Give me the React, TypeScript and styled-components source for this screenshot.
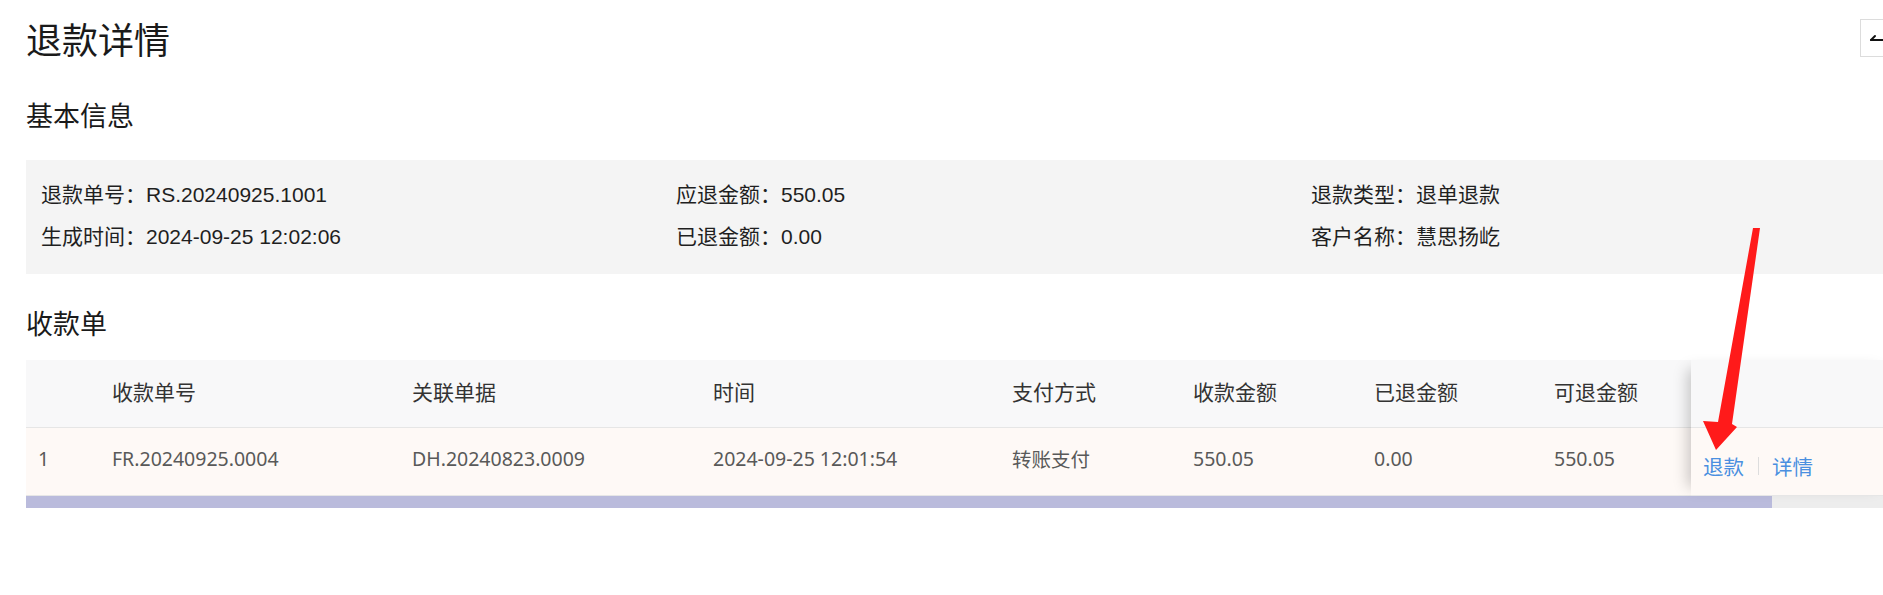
import React from "react";
import styled, { createGlobalStyle } from "styled-components";

const Global = createGlobalStyle`
  html, body { margin: 0; padding: 0; overflow: hidden; background: #fff; }
  * { box-sizing: border-box; }
`;

const Page = styled.div`
  position: relative;
  width: 1924px;
  padding: 0 26px;
  font-family: "Noto Sans", "Noto Sans CJK SC", sans-serif;
  color: #1f1f1f;
`;

const Header = styled.div`
  display: flex;
  align-items: center;
  justify-content: space-between;
  margin-top: 19px;
  height: 38px;
`;

const Title = styled.h1`
  margin: 0;
  font-family: "Noto Sans CJK SC", sans-serif;
  font-weight: 400;
  font-size: 36px;
  line-height: 38px;
  color: #1a1a1a;
`;

const BackButton = styled.button`
  width: 38px;
  height: 38px;
  border: 1px solid #dcdcdc;
  background: #fff;
  padding: 0;
  display: flex;
  align-items: center;
  justify-content: center;
`;

const SectionTitle = styled.h2<{ $top: number; $bottom: number }>`
  margin: ${(p) => p.$top}px 0 ${(p) => p.$bottom}px;
  font-family: "Noto Sans CJK SC", sans-serif;
  font-weight: 400;
  font-size: 27px;
  line-height: 40px;
  color: #1a1a1a;
`;

const InfoBox = styled.div`
  background: #f4f4f4;
  padding: 12px 15px 18px;
  display: grid;
  grid-template-columns: repeat(3, 635px);
  grid-auto-rows: 42px;
  align-items: center;
`;

const InfoItem = styled.div`
  font-family: "Liberation Sans", "Noto Sans CJK SC", sans-serif;
  font-size: 21px;
  color: #1f1f1f;
  white-space: nowrap;
`;

const TableFrame = styled.div`
  display: flex;
  flex-direction: column;
`;

const TableMain = styled.div`
  display: flex;
`;

const ScrollPane = styled.div`
  flex: 1;
  overflow: hidden;
`;

const COLS = "74px 300px 301px 299px 181px 181px 180px 200px";

const Row = styled.div<{ $head?: boolean }>`
  display: grid;
  grid-template-columns: ${COLS};
  height: 68px;
  padding-top: 9px;
  align-items: center;
  background: ${(p) => (p.$head ? "#f8f8f9" : "#fef9f6")};
  border-bottom: 1px solid #e6e6e6;
`;

const Cell = styled.div<{ $head?: boolean }>`
  padding: 0 12px;
  font-family: "Noto Sans", "Noto Sans CJK SC", sans-serif;
  font-size: ${(p) => (p.$head ? "21px" : "19.5px")};
  color: ${(p) => (p.$head ? "#333" : "#595959")};
  white-space: nowrap;
`;

const FixedPane = styled.div`
  width: 207px;
  position: relative;
  z-index: 1;
  box-shadow: -12px 0 14px -9px rgba(0, 0, 0, 0.22);
`;

const FixedCell = styled.div<{ $head?: boolean }>`
  height: 68px;
  display: flex;
  align-items: center;
  padding: 9px 12px 0;
  background: ${(p) => (p.$head ? "#f8f8f9" : "#fef9f6")};
  border-bottom: 1px solid #e6e6e6;
`;

const Link = styled.a`
  font-family: "Noto Sans CJK SC", sans-serif;
  font-size: 20.5px;
  color: #4a8fe0;
  text-decoration: none;
  cursor: pointer;
`;

const Divider = styled.span`
  width: 1px;
  height: 18px;
  background: #dddddd;
  margin: 0 13px 0 14px;
`;

const ScrollTrack = styled.div`
  height: 12px;
  background: #ededed;
`;

const ScrollThumb = styled.div`
  width: 1746px;
  height: 100%;
  background: #babbdc;
`;

const Annotation = styled.svg`
  position: absolute;
  left: 0;
  top: 0;
  z-index: 5;
  width: 1924px;
  height: 595px;
  pointer-events: none;
`;

const headers = ["", "收款单号", "关联单据", "时间", "支付方式", "收款金额", "已退金额", "可退金额", ""];
const row = ["1", "FR.20240925.0004", "DH.20240823.0009", "2024-09-25 12:01:54", "转账支付", "550.05", "0.00", "550.05", ""];

export default function App() {
  return (
    <>
      <Global />
      <Page>
        <Header>
          <Title>退款详情</Title>
          <BackButton aria-label="返回">
            <svg width="22" height="22" viewBox="0 0 22 22" fill="none" stroke="#111" strokeWidth="2" strokeLinecap="round">
              <path d="M3 13h16" />
              <path d="M3 13l4-4" />
            </svg>
          </BackButton>
        </Header>

        <SectionTitle $top={38} $bottom={25}>基本信息</SectionTitle>
        <InfoBox>
          <InfoItem>退款单号：RS.20240925.1001</InfoItem>
          <InfoItem>应退金额：550.05</InfoItem>
          <InfoItem>退款类型：退单退款</InfoItem>
          <InfoItem>生成时间：2024-09-25 12:02:06</InfoItem>
          <InfoItem>已退金额：0.00</InfoItem>
          <InfoItem>客户名称：慧思扬屹</InfoItem>
        </InfoBox>

        <SectionTitle $top={29} $bottom={17}>收款单</SectionTitle>
        <TableFrame>
          <TableMain>
            <ScrollPane>
              <Row $head>
                {headers.map((h, i) => (
                  <Cell key={i} $head>{h}</Cell>
                ))}
              </Row>
              <Row>
                {row.map((c, i) => (
                  <Cell key={i}>{c}</Cell>
                ))}
              </Row>
            </ScrollPane>
            <FixedPane>
              <FixedCell $head />
              <FixedCell>
                <Link>退款</Link>
                <Divider />
                <Link>详情</Link>
              </FixedCell>
            </FixedPane>
          </TableMain>
          <ScrollTrack>
            <ScrollThumb />
          </ScrollTrack>
        </TableFrame>

        <Annotation viewBox="0 0 1924 595">
          <polygon
            points="1753,209 1760,209 1732,405 1737,408 1716,431 1703,402 1718,403"
            fill="#ff1a1a"
          />
        </Annotation>
      </Page>
    </>
  );
}
